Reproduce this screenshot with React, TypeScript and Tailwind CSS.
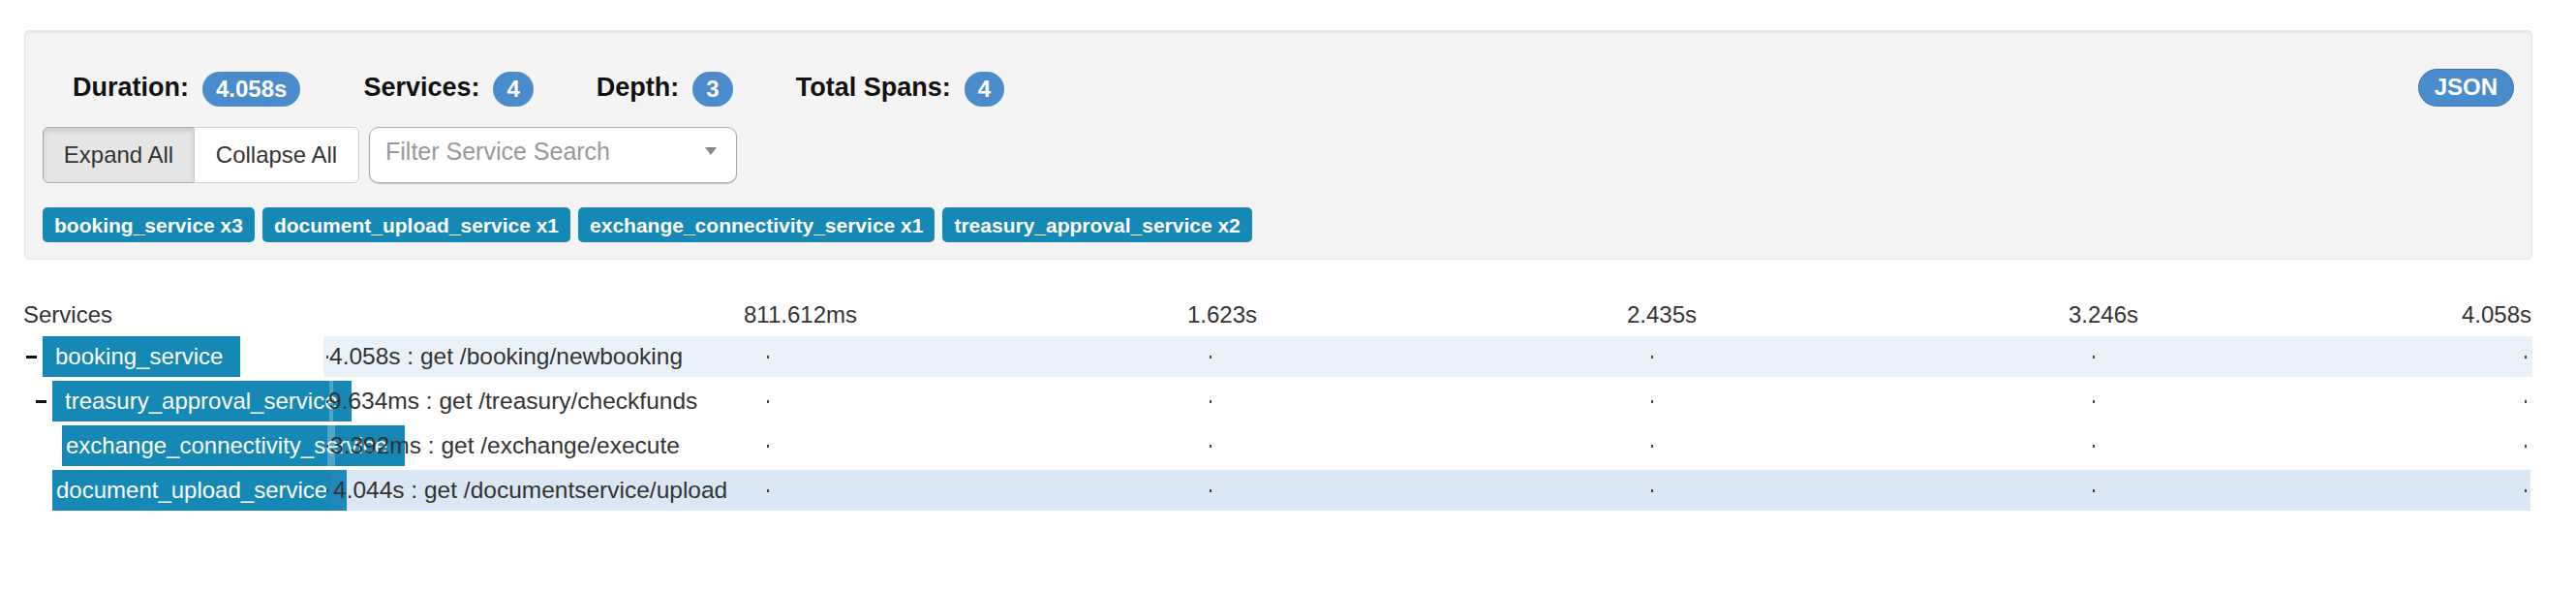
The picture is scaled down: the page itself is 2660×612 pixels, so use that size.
const stats = [
  { label: 'Duration:', value: '4.058s' },
  { label: 'Services:', value: '4' },
  { label: 'Depth:', value: '3' },
  { label: 'Total Spans:', value: '4' },
]

const tags = [
  'booking_service x3',
  'document_upload_service x1',
  'exchange_connectivity_service x1',
  'treasury_approval_service x2',
]

// tick labels sit on the timeline scale, last one pinned to the right edge
const ticks = [
  { label: '811.612ms', cls: 'left-[434px]' },
  { label: '1.623s', cls: 'left-[892px]' },
  { label: '2.435s', cls: 'left-[1346px]' },
  { label: '3.246s', cls: 'left-[1802px]' },
  { label: '4.058s', cls: 'right-0' },
]

const dots = ['left-[3px]', 'left-[458px]', 'left-[915px]', 'left-[1371px]', 'left-[1827px]', 'left-[2273px]']

const rows = [
  {
    name: 'booking_service',
    toggle: true,
    indent: 'pl-[27px]',
    bar: 'w-[204px] pl-[13px]',
    span: 'left-0 w-[2281px] bg-[#eaf2f9]',
    text: 'left-[6px]',
    label: '4.058s : get /booking/newbooking',
  },
  {
    name: 'treasury_approval_service',
    toggle: true,
    indent: 'pl-[37px]',
    bar: 'w-[309px] pl-[13px]',
    span: 'left-[6px] w-[4px] bg-white/25',
    text: 'left-[5px]',
    label: '9.634ms : get /treasury/checkfunds',
  },
  {
    name: 'exchange_connectivity_service',
    toggle: false,
    indent: 'pl-[64px]',
    bar: 'w-[354px] pl-[4px]',
    span: 'left-[4px] w-[8px] bg-white/25',
    text: 'left-[7px]',
    label: '3.392ms : get /exchange/execute',
  },
  {
    name: 'document_upload_service',
    toggle: false,
    indent: 'pl-[54px]',
    bar: 'w-[304px] pl-[4px]',
    span: 'left-[8px] w-[2271px] bg-[#428bca]/20',
    text: 'left-[10px]',
    label: '4.044s : get /documentservice/upload',
  },
]

function Badge({ children }: { children: React.ReactNode }) {
  return (
    <span className="mt-[4px] rounded-[20px] bg-[#4a8ccb] px-[14px] py-[6px] text-[24px] font-bold leading-none text-white">
      {children}
    </span>
  )
}

export default function App() {
  return (
    <div className="min-h-screen bg-white font-['Liberation_Sans',Arial,sans-serif] text-[#333]">
      <div className="ml-[25px] w-[2590px] pt-[31px]">
        {/* summary well */}
        <div className="rounded-[6px] border border-[#e3e3e3] bg-[#f4f4f4] px-[18px] pb-[17px] pt-[18px] shadow-[inset_0_2px_2px_rgba(0,0,0,0.06)]">
          <div className="mt-[20px] flex h-[40px] items-center justify-between">
            <div className="flex items-center gap-[65px] pl-[31px]">
              {stats.map((s) => (
                <div key={s.label} className="flex items-center gap-[14px]">
                  <span className="text-[27px] font-bold leading-none text-[#111]">{s.label}</span>
                  <Badge>{s.value}</Badge>
                </div>
              ))}
            </div>
            <button className="flex h-[39px] items-center rounded-full border border-[#3a74a8] bg-[#4a8ccb] px-[16px] text-[24px] font-bold leading-none text-white">
              JSON
            </button>
          </div>

          <div className="mt-[21px] flex items-center">
            <div className="flex h-[58px] text-[24px] leading-none">
              <button className="w-[157px] rounded-l-[6px] border border-[#adadad] bg-[#e6e6e6] text-[#333] shadow-[inset_0_3px_5px_rgba(0,0,0,0.125)]">
                Expand All
              </button>
              <button className="-ml-px w-[171px] rounded-r-[6px] border border-[#ccc] bg-white text-[#333]">
                Collapse All
              </button>
            </div>
            <div className="ml-[10px] flex h-[58px] w-[380px] items-start justify-between rounded-[10px] border border-[#aaa] bg-white pl-[16px] pr-[20px] pt-[12px] shadow-[0_1px_1px_rgba(0,0,0,0.2)]">
              <span className="text-[25px] leading-none text-[#999]">Filter Service Search</span>
              <svg width="12" height="8" viewBox="0 0 12 8" className="mt-[8px]">
                <polygon points="0,0 12,0 6,8" fill="#888" />
              </svg>
            </div>
          </div>

          <div className="mt-[25px] flex gap-[8px]">
            {tags.map((t) => (
              <span
                key={t}
                className="flex h-[36px] items-center rounded-[5px] bg-[#1588b6] px-[12px] text-[21px] font-bold leading-none text-white"
              >
                {t}
              </span>
            ))}
          </div>
        </div>
      </div>

      {/* timeline */}
      <div className="mt-[42px]">
        <div className="flex h-[30px] text-[24px] leading-[30px]">
          <div className="w-[334px] shrink-0 pl-[24px]">Services</div>
          <div className="relative w-[2280px]">
            {ticks.map((t) => (
              <span key={t.label} className={`absolute top-0 ${t.cls}`}>
                {t.label}
              </span>
            ))}
          </div>
        </div>

        <div className="mt-[7px] flex flex-col gap-[4px]">
          {rows.map((r) => (
            <div key={r.name} className="flex h-[42px]">
              <div className={`relative z-10 flex h-full w-[334px] shrink-0 items-center ${r.indent}`}>
                {r.toggle && <div className="mr-[6px] h-[3px] w-[11px] shrink-0 bg-[#111]" />}
                <div
                  className={`flex h-[42px] shrink-0 items-center whitespace-nowrap bg-[#1588b6] text-[24px] leading-none text-white ${r.bar}`}
                >
                  {r.name}
                </div>
              </div>
              <div className="relative h-full w-[2280px] shrink-0">
                <div className={`absolute top-0 z-[15] h-full ${r.span}`} />
                {dots.map((d) => (
                  <div key={d} className={`absolute top-[20px] z-[16] h-[3px] w-[2px] bg-[#444] ${d}`} />
                ))}
                <span
                  className={`absolute top-0 z-20 flex h-full items-center whitespace-nowrap text-[24.5px] leading-none text-[#333] ${r.text}`}
                >
                  {r.label}
                </span>
              </div>
            </div>
          ))}
        </div>
      </div>
    </div>
  )
}
